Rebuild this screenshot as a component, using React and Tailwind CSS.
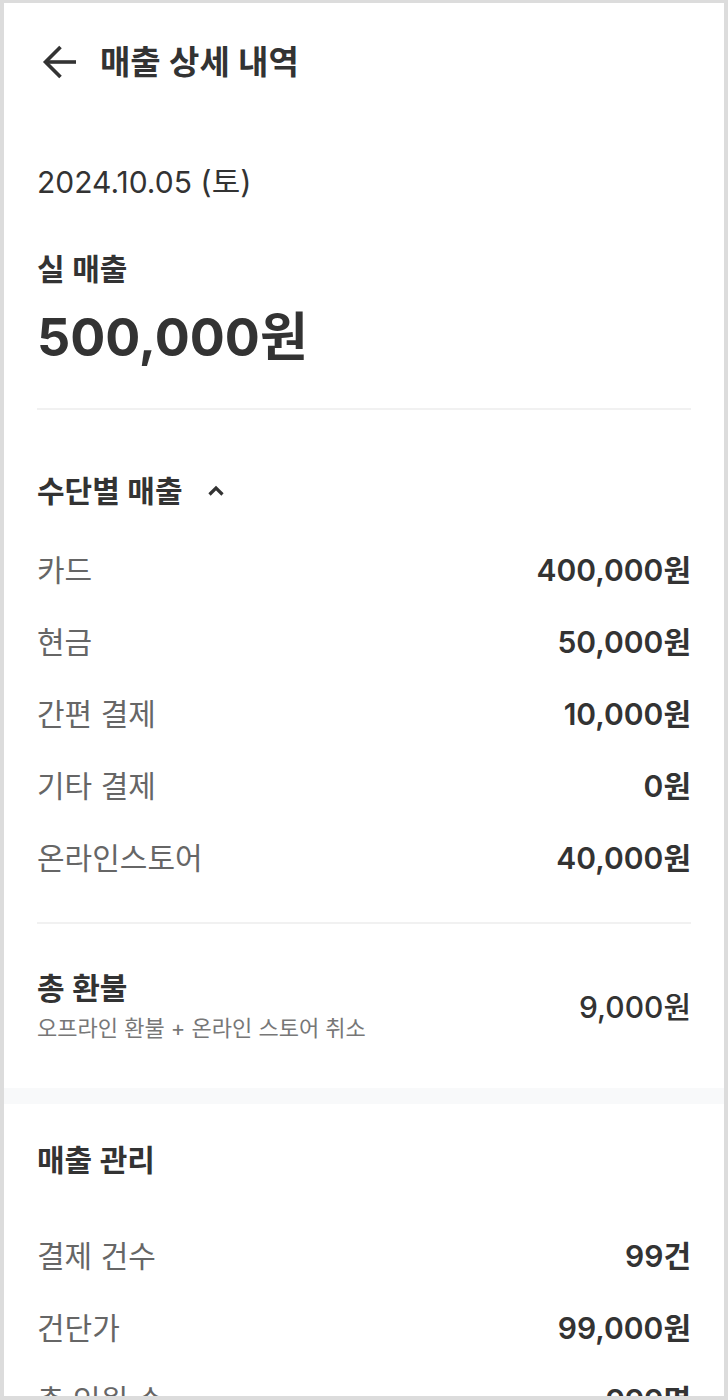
import { useState } from 'react';

const payments = [
  { label: '카드', value: '400,000원' },
  { label: '현금', value: '50,000원' },
  { label: '간편 결제', value: '10,000원' },
  { label: '기타 결제', value: '0원' },
  { label: '온라인스토어', value: '40,000원' },
];

const stats = [
  { label: '결제 건수', value: '99건' },
  { label: '건단가', value: '99,000원' },
  { label: '총 인원 수', value: '999명' },
];

function Row({ label, value }) {
  return (
    <div className="flex h-[72px] items-center justify-between">
      <span className="text-[30px] leading-[36px] text-[#666666]">{label}</span>
      <span className="text-[30px] leading-[36px] font-semibold text-[#333333]">{value}</span>
    </div>
  );
}

export default function App() {
  const [open, setOpen] = useState(true);

  return (
    <div
      className="h-[1400px] w-[728px] overflow-hidden border-x-4 border-t-[3px] border-b-4 border-[#dcdcdc] bg-white text-[#333333]"
      style={{ fontFamily: 'Inter, "Noto Sans CJK KR", sans-serif' }}
    >
      {/* header */}
      <div className="flex h-[117px] items-center px-[33px]">
        <button className="ml-1 flex items-center" aria-label="뒤로">
          <svg width="36" height="36" viewBox="0 0 36 36" fill="none">
            <path d="M19.5 3 L4.5 18 L19.5 33" stroke="#333333" strokeWidth="3.6" strokeLinejoin="miter" />
            <path d="M5 18 H35" stroke="#333333" strokeWidth="3.6" />
          </svg>
        </button>
        <h1 className="ml-[23px] text-[33px] leading-[40px] font-semibold">매출 상세 내역</h1>
      </div>

      <div className="px-[33px]">
        <div className="mt-[44px] text-[30px] leading-[36px]">
          2024.10.05 <span className="text-[31px]">(토)</span>
        </div>

        <div className="mt-[51px] text-[30px] leading-[36px] font-semibold">실 매출</div>
        <div className="mt-[20px] text-[52px] leading-[62px] font-bold">500,000원</div>

        <div className="mt-[39px] h-[2px] bg-[#f1f1f1]" />

        <button
          className="mt-[63px] flex items-center gap-[25px]"
          onClick={() => setOpen(!open)}
        >
          <span className="text-[30px] leading-[36px] font-semibold">수단별 매출</span>
          <svg width="16" height="12" viewBox="0 0 16 12" fill="none" className={open ? '' : 'rotate-180'}>
            <path d="M1.5 9.5 L8 3 L14.5 9.5" stroke="#333333" strokeWidth="3.2" />
          </svg>
        </button>

        {open && (
          <div className="mt-[25px]">
            {payments.map((p) => (
              <Row key={p.label} {...p} />
            ))}
          </div>
        )}

        <div className="mt-[28px] h-[2px] bg-[#f1f1f1]" />

        <div className="mt-[46px] flex items-center justify-between">
          <div>
            <div className="text-[30px] leading-[36px] font-semibold">총 환불</div>
            <div className="mt-[7px] text-[22px] leading-[30px] text-[#777777]">
              오프라인 환불 + 온라인 스토어 취소
            </div>
          </div>
          <span className="text-[30px] leading-[36px] font-medium">9,000원</span>
        </div>
      </div>

      <div className="mt-[45px] h-[16px] bg-[#f8f9fa]" />

      <div className="px-[33px]">
        <div className="mt-[38px] text-[30px] leading-[36px] font-semibold">매출 관리</div>
        <div className="mt-[42px]">
          {stats.map((s) => (
            <Row key={s.label} {...s} />
          ))}
        </div>
      </div>
    </div>
  );
}
